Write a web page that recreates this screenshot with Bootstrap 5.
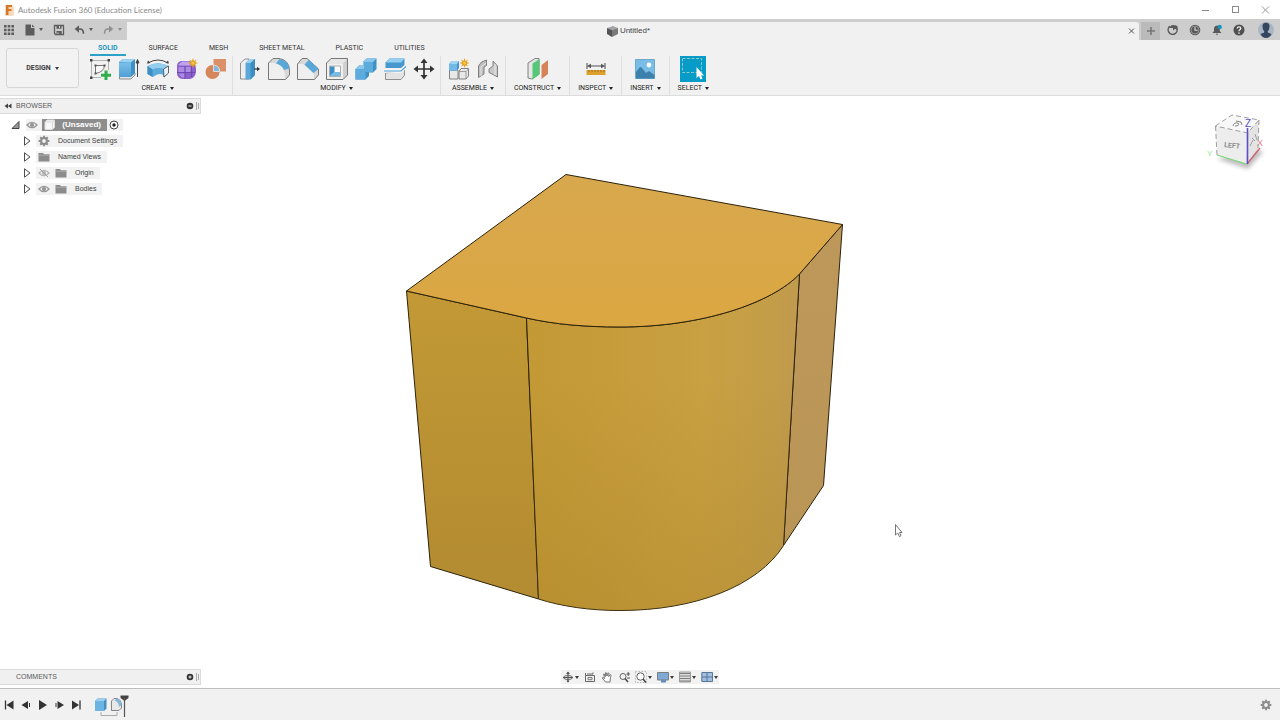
<!DOCTYPE html>
<html lang="en">
<head>
<meta charset="utf-8">
<meta name="viewport" content="width=device-width, initial-scale=1">
<title>Autodesk Fusion 360</title>
<link href="https://cdn.jsdelivr.net/npm/bootstrap@5.3.0/dist/css/bootstrap.min.css" rel="stylesheet">
<script src="https://cdn.jsdelivr.net/npm/bootstrap@5.3.0/dist/js/bootstrap.bundle.min.js" defer></script>
<style>
  :root { --chrome: #f1f1f1; --ink: #3c3c3c; }
  body { font: 7px/12px "Liberation Sans", Arial, sans-serif; color: var(--ink); background: #fff; }
  svg { display: block; flex: none; }
  .tool { border: 0; padding: 0; background: none; color: inherit; font: inherit; display: flex; align-items: center; justify-content: center; }
  .tri { width: 0; height: 0; border: 2px solid transparent; border-top: 3px solid currentColor; border-bottom: 0; flex: none; }

  .titlebar { height: 19px; padding: 0 9px 0 4px; font: 8px/18px Lato, "Liberation Sans", sans-serif; color: #8a8a8a; }
  .win-controls { gap: 20px; color: #8a8a8a; }
  .doc-bar { height: 21px; background: #cdcdcd; color: #5c5c5c; }
  .quick { width: 127px; padding: 0 5px 0 3px; }
  .quick .tool { gap: 4px; }
  .quick .tool.idle { color: #8e8e8e; }
  .doc-tab { background: var(--chrome); border-radius: 0 3px 0 0; margin-top: 3px; padding: 0 3px 0 4px; font-size: 8px; color: #444; }
  .doc-name { gap: 2px; }
  .new-tab { width: 19px; background: #bababa; margin: 3px 0 0 2px; }
  .account { gap: 8px; padding: 0 6px; }

  .ribbon { background: var(--chrome); border-bottom: 1px solid #dcdcdc; font-family: Roboto, "Liberation Sans", sans-serif; font-size: 7px; }
  .workspace { width: 73px; height: 40px; margin: 8px 4px 0 6px; gap: 4px; border: 1px solid #d6d6d6; border-radius: 3px; font-weight: 700; background: #f3f3f3; }
  .ribbon-tabs { gap: 15px; padding-left: 7px; height: 16px; }
  .ribbon-tabs a { padding: 1px 8px 0; color: #333; text-decoration: none; line-height: 15px; border-bottom: 2px solid transparent; height: 16px; }
  .ribbon-tabs a.active { color: #1a97bd; border-color: #2ba3c8; font-weight: 700; }
  .group { padding: 1px 2px 0; border-right: 1px solid #dedede; color: #222; }
  .group.pair { padding: 1px 3px 0; }
  .group.single { padding: 1px 8px 0; }
  .group:last-child { border: 0; }
  .group .icon-btn { width: 29px; height: 24px; }
  .group .label-btn { gap: 3px; line-height: 14px; }

  .viewport { min-height: 0; }
  .panel-bar { width: 201px; height: 16px; background: #f0f0f0; border: 1px solid #dadada; border-left: 0; padding: 0 1px 0 4px; color: #5a5a5a; }
  .browser { padding-top: 2px; }
  .tree { gap: 4px; padding: 5px 0 0; }
  .node { height: 12px; }
  .node .chip { background: #f2f2f2; height: 12px; padding-right: 6px; }
  .node .chip.head { padding-right: 2px; }
  .root-name { background: #8d8d8d; color: #fff; font-weight: 700; font-size: 8px; height: 12px; width: 65px; padding: 0 6px 0 2px; }
  .foot { display: grid; grid-template-columns: 1fr auto 1fr; align-items: center; padding-bottom: 3px; }
  .nav-tools { background: #f2f2f2; gap: 5px; height: 14px; padding: 0 1px; }
  .nav-tools .tool { gap: 1px; }
  .cube { right: 14px; top: 12px; }
  .timeline { height: 32px; background: var(--chrome); border-top: 1px solid #bdbdbd; padding: 0 8px 0 3px; }
  .playback { color: #333; }
</style>
</head>
<body class="vh-100 d-flex flex-column overflow-hidden">

<svg width="0" height="0" class="position-absolute" aria-hidden="true">
  <defs>
    <linearGradient id="blueFace" x1="0" y1="0" x2="0" y2="1"><stop offset="0" stop-color="#7cc0ea"/><stop offset="1" stop-color="#4f9fd4"/></linearGradient>
    <symbol id="eye" viewBox="0 0 12 12"><path d="M1 6Q6 .5 11 6Q6 11.500 1 6Z" fill="none" stroke="#929292" stroke-width="1.200"/><circle cx="6" cy="6" r="2.100" fill="#929292"/></symbol>
    <symbol id="folder" viewBox="0 0 12 12"><path d="M.5 2H5L6 3.200H11.500V10.500H.5Z" fill="#8b8b8b"/><path d="M.5 4.200H11.500" stroke="#bcbcbc" stroke-width=".7"/></symbol>
    <symbol id="expand" viewBox="0 0 12 12"><path d="M3.500 1.800V10.200L9 6Z" fill="#fff" stroke="#4a4a4a"/></symbol>
    <symbol id="gear" viewBox="0 0 12 12"><circle cx="6" cy="6" r="2.900" fill="none" stroke="#8a8a8a" stroke-width="2"/><path d="M6 .7V2.500M6 9.500V11.300M.7 6H2.500M9.500 6H11.300M2.250 2.250L3.500 3.500M8.500 8.500L9.750 9.750M2.250 9.750L3.500 8.500M8.500 3.500L9.750 2.250" stroke="#8a8a8a" stroke-width="1.900"/></symbol>
    <symbol id="star" viewBox="0 0 10 10"><path d="M5 0L6 3L8.500 1.500L7.200 4L10 5L7.200 6L8.500 8.500L6 7.200L5 10L4 7.200L1.500 8.500L2.800 6L0 5L2.800 4L1.500 1.500L4 3Z" fill="#e2a21f"/><circle cx="5" cy="5" r="1.500" fill="#f5c54c"/></symbol>
  </defs>
</svg>

<header class="titlebar d-flex align-items-center justify-content-between">
  <div class="d-flex align-items-center gap-1">
    <svg width="10" height="12" viewBox="0 0 10 12"><path d="M1 1H8L10 3V11L8 12H1Z" fill="#f6d9bd"/><path d="M2 1H8V3H4.500V5H7.500V7H4.500V11H2Z" fill="#d87724"/></svg>
    <span>Autodesk Fusion 360 (Education License)</span>
  </div>
  <div class="win-controls d-flex">
    <button class="tool" aria-label="Minimize"><svg width="10" height="10"><path d="M1 5.500H8" stroke="currentColor"/></svg></button>
    <button class="tool" aria-label="Maximize"><svg width="10" height="10"><rect x="1.500" y="1.500" width="6" height="6" fill="none" stroke="currentColor"/></svg></button>
    <button class="tool" aria-label="Close"><svg width="10" height="10"><path d="M1 1.500L8 8.500M8 1.500L1 8.500" stroke="currentColor" stroke-width=".9"/></svg></button>
  </div>
</header>

<div class="doc-bar d-flex">
  <div class="quick d-flex align-items-center justify-content-between">
    <button class="tool" aria-label="Data panel"><svg width="12" height="12" viewBox="0 0 12 12"><path d="M1 1h2.600v2.600H1zM4.700 1h2.600v2.600H4.700zM8.400 1H11v2.600H8.400zM1 4.700h2.600v2.600H1zM4.700 4.700h2.600v2.600H4.700zM8.400 4.700H11v2.600H8.400zM1 8.400h2.600V11H1zM4.700 8.400h2.600V11H4.700zM8.400 8.400H11V11H8.400z" fill="currentColor"/></svg></button>
    <button class="tool" aria-label="File"><svg width="10" height="12" viewBox="0 0 10 12"><path d="M.5.5H6V4H9.500V11.500H.5Z" fill="currentColor"/><path d="M7 .5L9.500 3H7Z" fill="currentColor"/></svg><span class="tri"></span></button>
    <button class="tool" aria-label="Save"><svg width="12" height="12" viewBox="0 0 12 12"><path d="M1.500 1.500H10.500V10.500H2.500L1.500 9.500Z" fill="none" stroke="currentColor" stroke-width="1.300"/><path d="M3.500 1.500H8.500V4.800H3.500ZM3.500 7H8.700V10.500H3.500Z" fill="currentColor"/><path d="M6.500 2V4M5 8.500V10" stroke="#ddd"/></svg></button>
    <button class="tool" aria-label="Undo"><svg width="11" height="12" viewBox="0 0 11 12"><path d="M3 5H6Q9.500 5 9.500 9.800" fill="none" stroke="currentColor" stroke-width="1.700"/><path d="M5 1.200V8.800L.7 5Z" fill="currentColor"/></svg><span class="tri"></span></button>
    <button class="tool idle" aria-label="Redo"><svg width="11" height="12" viewBox="0 0 11 12"><path d="M8 5H5Q1.500 5 1.500 9.800" fill="none" stroke="currentColor" stroke-width="1.400"/><path d="M6 1.500V8.500L10.300 5Z" fill="currentColor"/></svg><span class="tri"></span></button>
  </div>
  <div class="doc-tab flex-grow-1 d-flex align-items-center">
    <div class="doc-name flex-grow-1 d-flex align-items-center justify-content-center">
      <svg width="11" height="11" viewBox="0 0 11 11"><path d="M0 2L6 0L11 2L5 4Z" fill="#a3a3a3"/><path d="M0 2L5 4V11L0 8Z" fill="#555"/><path d="M5 4L11 2V8L5 11Z" fill="#797979"/></svg>
      <span>Untitled*</span>
    </div>
    <button class="tool" aria-label="Close tab"><svg width="10" height="10"><path d="M3 2.500L8 7.500M8 2.500L3 7.500" stroke="#555"/></svg></button>
  </div>
  <button class="tool new-tab" aria-label="New tab"><svg width="10" height="10"><path d="M5 1V9M1 5H9" stroke="#777" stroke-width="1.600"/></svg></button>
  <div class="account d-flex align-items-center">
    <button class="tool" aria-label="Extensions"><svg width="14" height="14" viewBox="0 0 14 14"><path d="M4 3.200A4.500 4.500 0 1 0 10.500 4.500" fill="none" stroke="#595959" stroke-width="1.500"/><path d="M3 5L5.500 2.300L8 2L11.500 3L11 7L9 5.800L7 7.500L7 5Z" fill="#595959"/></svg></button>
    <button class="tool" aria-label="Job status"><svg width="14" height="14" viewBox="0 0 14 14"><circle cx="7" cy="7" r="5.300" fill="#595959"/><circle cx="7" cy="7" r="4" fill="none" stroke="#aaa" stroke-width=".7"/><path d="M7 4V7.300H9.700" fill="none" stroke="#ddd" stroke-width="1.100"/></svg></button>
    <button class="tool" aria-label="Notifications"><svg width="14" height="14" viewBox="0 0 14 14"><path d="M2.500 10L4 8V5.500Q4 3 7 2.500Q9.800 3 9.800 6V8L11.500 10ZM5.800 10.700H8.200L7 12.200Z" fill="#595959"/><circle cx="9.700" cy="4" r="2.200" fill="#1595c1"/></svg></button>
    <button class="tool" aria-label="Help"><svg width="14" height="14" viewBox="0 0 14 14"><circle cx="7" cy="7" r="5.500" fill="#505050"/><path d="M5.200 5.500Q5.300 3.900 7 3.900T8.800 5.400Q8.700 6.300 7.700 6.800Q7 7.200 7 8.200" fill="none" stroke="#eee" stroke-width="1.300"/><circle cx="7" cy="10" r=".8" fill="#eee"/></svg></button>
    <button class="tool ms-1" aria-label="Profile"><svg width="16" height="16" viewBox="0 0 16 16"><circle cx="8" cy="8" r="8" fill="#a9b4c4"/><path d="M8 .8Q12 1 11.500 5Q11.300 8 9.800 9V10.500L13.500 12Q11.500 16 8 16T2.500 12L6.200 10.500V9Q4.700 8 4.500 5Q4 1 8 .8Z" fill="#34455f"/></svg></button>
  </div>
</div>

<div class="ribbon d-flex align-items-start">
  <button class="tool workspace">DESIGN <span class="tri"></span></button>
  <div>
    <nav class="ribbon-tabs d-flex">
      <a href="#" class="active">SOLID</a><a href="#">SURFACE</a><a href="#">MESH</a><a href="#">SHEET METAL</a><a href="#">PLASTIC</a><a href="#">UTILITIES</a>
    </nav>
    <div class="d-flex">
      <div class="group d-flex flex-column align-items-center">
        <div class="d-flex">
          <button class="tool icon-btn" aria-label="Create sketch"><svg width="24" height="24" viewBox="0 0 24 24"><path d="M4 3.500H20M3.500 4V20M20.500 4V13M4 20.500H13" fill="none" stroke="#a5a5a5" stroke-width=".8"/><path d="M2 2h2.500v2.500H2zM19.500 2h2.500v2.500h-2.500zM2 19.500h2.500v2.500H2z" fill="#444"/><path d="M7.500 16.500V8.500H16.500Q16 15 7.500 16.500Z" fill="#fafafa" stroke="#666" stroke-width=".9"/><path d="M6.500 7.500h2v2h-2zM15.500 7.500h2v2h-2zM6.500 15.500h2v2h-2z" fill="#555"/><path d="M18 13.500V23M13 18.200H23" stroke="#31ad4d" stroke-width="3"/></svg></button>
          <button class="tool icon-btn" aria-label="Extrude"><svg width="24" height="24" viewBox="0 0 24 24"><path d="M2.500 19.500V22H14L18 18V16" fill="#e5e5e5" stroke="#777" stroke-width=".8"/><path d="M2 5L6 2H18V16L14 20H2Z" fill="#3f90c6"/><path d="M2 5L6 2H18L14 5.500Z" fill="#9bd2f1"/><path d="M2 5.500H14V20H2Z" fill="url(#blueFace)"/><path d="M20.500 20V4M19 6L20.500 2.500L22 6Z" fill="#444" stroke="#444"/></svg></button>
          <button class="tool icon-btn" aria-label="Revolve"><svg width="24" height="24" viewBox="0 0 24 24"><path d="M2 6Q12 0 22 6" fill="none" stroke="#444"/><path d="M1 6.500L2 3.500L4.500 6ZM23 6.500L22 3.500L19.500 6Z" fill="#444"/><path d="M1.500 9Q12 3.500 22.500 9V16L18 20.500L16.500 17.500Q12 15.500 7 20L1.500 17Z" fill="#5aaadd"/><path d="M1.500 9Q12 3.500 22.500 9L17.500 12Q12 10 6.500 12.500Z" fill="#95cdee"/><path d="M1.500 9L6.500 12.500V20L1.500 17Z" fill="#3e8ec4"/><path d="M17.500 12L22.500 9V16L18 20Z" fill="#e7f3fa" stroke="#444" stroke-width=".8"/></svg></button>
          <button class="tool icon-btn" aria-label="Create form"><svg width="24" height="24" viewBox="0 0 24 24"><path d="M6 4H14Q20 5 21 11V15Q20 21 15 22H7Q2 21 2 16V9Q2 5 6 4Z" fill="#8a61cb"/><path d="M3 8L7 4.500H14L17 7L14 8.500H5Z" fill="#c0a5ec"/><path d="M4 10H9.500V15H3.500V11ZM10.500 10H15.500V15H10.500ZM4 16.500H9.500V21Q5 20.500 4 16.500Z" fill="#ad8be4"/><path d="M10 9V22M2 15.500H20M16.500 9V20" stroke="#6844a7" stroke-width=".8" fill="none"/><use href="#star" x="13" y="1" width="10" height="10"/></svg></button>
          <button class="tool icon-btn" aria-label="Derive"><svg width="24" height="24" viewBox="0 0 24 24"><path d="M9.500 2H22V14.500H9.500Z" fill="#da9068"/><circle cx="8.500" cy="15" r="7" fill="#d5875b"/><path d="M9.500 8Q16 9 15.500 14.500H9.500Z" fill="#7eb8dc" stroke="#eee" stroke-width=".8"/></svg></button>
        </div>
        <button class="tool label-btn">CREATE <span class="tri"></span></button>
      </div>
      <div class="group d-flex flex-column align-items-center">
        <div class="d-flex">
          <button class="tool icon-btn" aria-label="Press pull"><svg width="24" height="24" viewBox="0 0 24 24"><path d="M2.500 6L7 2H11V22H2.500Z" fill="#eee" stroke="#777" stroke-width=".8"/><path d="M7.500 6L11.500 2H17V18L12.500 22.500H7.500Z" fill="#5aa8da"/><path d="M7.500 6L11.500 2H17L12.500 6Z" fill="#9dd1ef"/><path d="M12.500 6L17 2V18L12.500 22.500Z" fill="#3e8ec4"/><path d="M16 12H19.500" stroke="#333" stroke-width="1.200"/><path d="M19 9.700L22 12L19 14.300Z" fill="#333"/></svg></button>
          <button class="tool icon-btn" aria-label="Fillet"><svg width="24" height="24" viewBox="0 0 24 24"><path d="M1.500 22.500V6L6 1.500H12Q22 3 22.500 13V18L18.500 22.500Z" fill="#d8d8d8" stroke="#777"/><path d="M2 6H7Q17 7 18 18V22H2Z" fill="#efefef"/><path d="M9 6.500L12.500 2Q21.500 3.500 22.300 11.500L17 13Q15 8 9 6.500Z" fill="#59a8da"/></svg></button>
          <button class="tool icon-btn" aria-label="Chamfer"><svg width="24" height="24" viewBox="0 0 24 24"><path d="M1.500 22.500V7L6 1.500H11L22.500 12V18L18.500 22.500Z" fill="#d8d8d8" stroke="#777"/><path d="M2 7H7L18 17V22H2Z" fill="#efefef"/><path d="M8.500 7.500L13 2.800L22.500 12L17.500 16Z" fill="#59a8da"/></svg></button>
          <button class="tool icon-btn" aria-label="Shell"><svg width="24" height="24" viewBox="0 0 24 24"><path d="M1.500 22.500V6L6 1.500H22.500V18L18 22.500Z" fill="#cfcfcf" stroke="#777"/><path d="M2 6.500L6.500 2H22L18 6.500Z" fill="#e6e6e6"/><path d="M2 6.500H18V22H2Z" fill="#f0f0f0"/><path d="M4.500 9H15.500V19.500H4.500Z" fill="#fafafa" stroke="#999" stroke-width=".8"/><path d="M5 9.500L9.500 9.500V15L5 19Z" fill="#3c90c6"/><path d="M5 19L9.500 15H15V19Z" fill="#77bce6"/></svg></button>
          <button class="tool icon-btn" aria-label="Combine"><svg width="24" height="24" viewBox="0 0 24 24"><path d="M1.500 22.500V12L5 8.500H9V5L12.500 1.500H22.500V12L19 15.500H15V19L11.500 22.500Z" fill="#3f90c6"/><path d="M1.500 12L5 8.500H9V5L12.500 1.500H22.500L19 5H10.500V12Z" fill="#8ac7eb"/><path d="M1.500 12H10V5H19V15H11.500V22.500H1.500Z" fill="#5cabdc"/></svg></button>
          <button class="tool icon-btn" aria-label="Split body"><svg width="24" height="24" viewBox="0 0 24 24"><path d="M2.500 11V5.500L6.500 1.500H21.500V8L18 11Z" fill="#4798ce"/><path d="M2.500 5.500L6.500 1.500H21.500L18 5.500Z" fill="#94cef0"/><path d="M2.500 16V22.500H18L21.500 18.500V13Z" fill="#e3e3e3" stroke="#777" stroke-width=".8"/><path d="M1 14H18L23 9.500" fill="none" stroke="#f7f7f7" stroke-width="3.500"/><path d="M1 14H18L23 9.500" fill="none" stroke="#4da1d5" stroke-width="1.200"/></svg></button>
          <button class="tool icon-btn" aria-label="Move"><svg width="24" height="24" viewBox="0 0 24 24"><path d="M12 4V20M4 12H20" stroke="#333" stroke-width="1.700"/><path d="M12 1.500L15.500 6H8.500ZM12 22.500L15.500 18H8.500ZM1.500 12L6 8.500V15.500ZM22.500 12L18 8.500V15.500Z" fill="#333"/></svg></button>
        </div>
        <button class="tool label-btn">MODIFY <span class="tri"></span></button>
      </div>
      <div class="group pair d-flex flex-column align-items-center">
        <div class="d-flex">
          <button class="tool icon-btn" aria-label="New component"><svg width="24" height="24" viewBox="0 0 24 24"><path d="M2.500 13H11V22H2.500ZM12 14.500L14 11.500H21.500V19L19 22H12Z" fill="#e8e8e8" stroke="#777" stroke-width=".9"/><path d="M12 14.500H19V22M19 14.500L21.500 12" fill="none" stroke="#888" stroke-width=".8"/><path d="M2 7L4.500 4H12V11L10 13.500H2Z" fill="#4596cc"/><path d="M2 7L4.500 4H12L10 7Z" fill="#a1d4f1"/><path d="M2 7H10V13.500H2Z" fill="#72b8e4"/><use href="#star" x="12.500" y="1" width="10" height="10"/></svg></button>
          <button class="tool icon-btn" aria-label="Joint"><svg width="24" height="24" viewBox="0 0 24 24"><path d="M2.500 20.500V9L5.500 5L10.500 3V8.500L8 10V17Z" fill="#bdbdbd" stroke="#777" stroke-width=".9"/><path d="M5 19V10L10 6" fill="none" stroke="#e9e9e9"/><path d="M21.500 20V9L17 4V9L13 12V15.500L17 17.500Z" fill="#c8c8c8" stroke="#777" stroke-width=".9"/><path d="M19 7V18" stroke="#eaeaea"/></svg></button>
        </div>
        <button class="tool label-btn">ASSEMBLE <span class="tri"></span></button>
      </div>
      <div class="group single d-flex flex-column align-items-center">
        <button class="tool icon-btn" aria-label="Offset plane"><svg width="24" height="24" viewBox="0 0 24 24"><path d="M2 21V6L9 1.500H13V17L6 22Z" fill="#e6e6e6" stroke="#777" stroke-width=".9"/><path d="M6.500 6.500L13.500 2V17.500L6.500 22.500Z" fill="#55c878"/><path d="M15.500 8L22 3V17L15.500 22Z" fill="#d58358"/></svg></button>
        <button class="tool label-btn">CONSTRUCT <span class="tri"></span></button>
      </div>
      <div class="group single d-flex flex-column align-items-center">
        <button class="tool icon-btn" aria-label="Measure"><svg width="24" height="24" viewBox="0 0 24 24"><path d="M3 6V12M21 6V12M5 9H19" stroke="#555" stroke-width="1.100"/><path d="M3 9L7 6.700V11.300ZM21 9L17 6.700V11.300Z" fill="#555"/><path d="M2.500 13H21.500V18H2.500Z" fill="#dca02c"/><path d="M5 13V15M8 13V15M11 13V15M14 13V15M17 13V15M20 13V15" stroke="#946814" stroke-width=".8"/></svg></button>
        <button class="tool label-btn">INSPECT <span class="tri"></span></button>
      </div>
      <div class="group single d-flex flex-column align-items-center">
        <button class="tool icon-btn" aria-label="Insert image"><svg width="24" height="24" viewBox="0 0 24 24"><path d="M2.500 2.500H21.500V21.500H2.500Z" fill="#79bce5" stroke="#5b9cc4" stroke-width=".8"/><circle cx="16" cy="8" r="2.400" fill="#f5fbff"/><path d="M3 15L7 10L8.500 10.500L13 16L16 14L21.500 18V21.500H3Z" fill="#3c80ac"/></svg></button>
        <button class="tool label-btn">INSERT <span class="tri"></span></button>
      </div>
      <div class="group single d-flex flex-column align-items-center">
        <button class="tool icon-btn" aria-label="Select"><svg width="26" height="26" viewBox="0 0 26 26"><path d="M0 0H26V26H0Z" fill="#079bc8"/><path d="M2.500 2.500H21.500V16.500H2.500Z" fill="none" stroke="#8fc4c8" stroke-dasharray="3 1.500"/><path d="M16.500 11V22L19 20L20.500 23.500L22.500 22.500L21 19.500H24Z" fill="#fff"/></svg></button>
        <button class="tool label-btn">SELECT <span class="tri"></span></button>
      </div>
    </div>
  </div>
</div>

<main class="viewport flex-grow-1 position-relative d-flex flex-column justify-content-between">
  <svg class="position-absolute top-0 start-0 w-100 h-100" viewBox="0 96 1280 592" role="img" aria-label="Filleted box model">
    <defs>
      <linearGradient id="topFace" x1="0" y1="0" x2="0" y2="1"><stop offset="0" stop-color="#d8a84e"/><stop offset="1" stop-color="#dba742"/></linearGradient>
      <linearGradient id="leftFace" x1="0" y1="0" x2="0" y2="1"><stop offset="0" stop-color="#c29935"/><stop offset="1" stop-color="#b38b31"/></linearGradient>
      <linearGradient id="roundFace" x1="0" y1="0" x2="1" y2="0"><stop offset="0" stop-color="#c29935"/><stop offset=".3" stop-color="#c69c3b"/><stop offset=".65" stop-color="#c9a042"/><stop offset=".9" stop-color="#c39d48"/><stop offset="1" stop-color="#c09a4f"/></linearGradient>
      <linearGradient id="roundShade" x1="0" y1="0" x2="0" y2="1"><stop offset=".3" stop-color="#a07a20" stop-opacity="0"/><stop offset="1" stop-color="#a07a20" stop-opacity=".3"/></linearGradient>
      <linearGradient id="rightFace" x1="0" y1="0" x2="0" y2="1"><stop offset="0" stop-color="#bd985a"/><stop offset="1" stop-color="#b99556"/></linearGradient>
    </defs>
    <g stroke="#2c220c" stroke-width="1" stroke-linejoin="round">
      <path d="M406.500 291L526.500 318L538.500 599L430.500 566.500Z" fill="url(#leftFace)"/>
      <path d="M799.500 274L842.500 224.500L823.500 485.500L783.500 545.500Z" fill="url(#rightFace)"/>
      <path d="M526.500 318C555 324.500 586 327 620 327C702 327 772 303 799.500 274L783.500 545.500C758 586 695 610.500 620 610.500C590 610.500 562 606.500 538.500 599Z" fill="url(#roundFace)"/>
      <path d="M526.500 318C555 324.500 586 327 620 327C702 327 772 303 799.500 274L783.500 545.500C758 586 695 610.500 620 610.500C590 610.500 562 606.500 538.500 599Z" fill="url(#roundShade)" stroke="none"/>
      <path d="M406.500 291L566 174.500L842.500 224.500L799.500 274C772 303 702 327 620 327C586 327 555 324.500 526.500 318Z" fill="url(#topFace)"/>
    </g>
    <path d="M895.500 524.500V535L897.700 533L899.300 536.500L901 535.700L899.500 532.500H902Z" fill="#fff" stroke="#666" stroke-width=".9"/>
  </svg>

  <div class="browser position-relative">
    <div class="panel-bar d-flex align-items-center">
      <svg width="8" height="8"><path d="M4 1.500V6.500L.5 4ZM7.500 1.500V6.500L4 4Z" fill="#444"/></svg>
      <span class="flex-grow-1 ps-1">BROWSER</span>
      <button class="tool" aria-label="Collapse"><svg width="10" height="8"><circle cx="5" cy="4" r="3.300" fill="#333"/><path d="M3.500 4H6.500" stroke="#eee"/></svg></button>
      <svg width="4" height="8"><path d="M1.500 0V8M3.500 1V7" stroke="#999" stroke-width=".8"/></svg>
    </div>
    <div class="tree d-flex flex-column">
      <div class="node d-flex">
        <svg width="26" height="12"><path d="M12 9.500H19V2.500Z" fill="#999" stroke="#444"/></svg>
        <div class="chip d-flex align-items-center head">
          <svg width="12" height="12"><use href="#eye"/></svg>
          <div class="root-name d-flex align-items-center justify-content-between ms-1">
            <svg width="12" height="12" viewBox="0 0 12 12"><path d="M1 10.500V3L3 1H10.500V8.500L8.500 10.500Z" fill="#f8f8f8" stroke="#ddd"/><path d="M1 3H8.500V10.500M8.500 3L10.500 1" fill="none" stroke="#ccc" stroke-width=".7"/></svg>
            <span>(Unsaved)</span>
          </div>
          <svg width="14" height="12" viewBox="0 0 14 12"><circle cx="7" cy="6" r="4" fill="#fff" stroke="#444"/><circle cx="7" cy="6" r="1.700" fill="#222"/></svg>
        </div>
      </div>
      <div class="node d-flex">
        <svg class="ms-3" width="20" height="12" viewBox="0 0 20 12"><use href="#expand" x="5" width="12" height="12"/></svg>
        <div class="chip d-flex"><svg width="22" height="12"><use href="#gear" x="2" width="12" height="12"/></svg><span>Document Settings</span></div>
      </div>
      <div class="node d-flex">
        <svg class="ms-3" width="20" height="12" viewBox="0 0 20 12"><use href="#expand" x="5" width="12" height="12"/></svg>
        <div class="chip d-flex"><svg width="22" height="12"><use href="#folder" x="2" width="12" height="12"/></svg><span>Named Views</span></div>
      </div>
      <div class="node d-flex">
        <svg class="ms-3" width="20" height="12" viewBox="0 0 20 12"><use href="#expand" x="5" width="12" height="12"/></svg>
        <div class="chip d-flex"><svg width="39" height="12"><g opacity=".65"><use href="#eye" x="2" width="12" height="12"/><path d="M4 2L12 10" stroke="#777"/></g><use href="#folder" x="19" width="12" height="12"/></svg><span>Origin</span></div>
      </div>
      <div class="node d-flex">
        <svg class="ms-3" width="20" height="12" viewBox="0 0 20 12"><use href="#expand" x="5" width="12" height="12"/></svg>
        <div class="chip d-flex"><svg width="39" height="12"><use href="#eye" x="2" width="12" height="12"/><use href="#folder" x="19" width="12" height="12"/></svg><span>Bodies</span></div>
      </div>
    </div>
  </div>

  <svg class="cube position-absolute" width="62" height="64" viewBox="1204 108 62 64" role="img" aria-label="View cube">
    <defs><filter id="soft"><feGaussianBlur stdDeviation="2"/></filter></defs>
    <path d="M1217 159L1248 169L1263 152L1255 148Z" fill="#888" opacity=".55" filter="url(#soft)"/>
    <path d="M1215.500 126L1232 115L1259 120L1247.500 133Z" fill="#f8f8f8"/>
    <path d="M1215.500 126L1247.500 133L1246.500 164L1217 155Z" fill="#ededed"/>
    <path d="M1247.500 133L1259 120L1258 148L1246.500 164Z" fill="#e4e4e4"/>
    <path d="M1215.500 126L1232 115L1259 120L1247.500 133ZM1215.500 126L1217 155M1259 120L1258 148" fill="none" stroke="#888" stroke-width=".8" stroke-dasharray="5 3"/>
    <path d="M1233 126Q1234 122 1238 123Q1240 126 1235 126M1236 121L1241 122L1242 125" fill="none" stroke="#777" stroke-width=".9"/>
    <path d="M1250 146L1253 140M1252 138L1255 141M1255 134L1257 140" stroke="#999" stroke-width=".9"/>
    <path d="M1217 155L1246.500 164" stroke="#79d979" stroke-width="1.300"/>
    <path d="M1247 164L1260 148" stroke="#d2606e" stroke-width="1.200"/>
    <path d="M1247.500 128V164" stroke="#5a4fc8" stroke-width="1.600"/>
    <text x="1224" y="147" font-size="7" font-weight="700" fill="#8c8c8c" font-family="Roboto, sans-serif" transform="rotate(6 1224 147)">LEFT</text>
    <g font-family="Liberation Sans, sans-serif">
      <text x="1245" y="127" font-size="10" fill="#5a4fc8">Z</text>
      <text x="1257" y="146" font-size="9" fill="#e0808a">X</text>
      <text x="1207" y="156" font-size="8" fill="#8fe88f">Y</text>
    </g>
  </svg>

  <div class="foot position-relative">
    <div class="panel-bar d-flex align-items-center">
      <span class="flex-grow-1 ps-1 ms-2">COMMENTS</span>
      <button class="tool" aria-label="Add comment"><svg width="10" height="8"><circle cx="5" cy="4" r="3.300" fill="#333"/><path d="M3.500 4H6.500M5 2.500V5.500" stroke="#eee"/></svg></button>
      <svg width="4" height="8"><path d="M1.500 0V8M3.500 1V7" stroke="#999" stroke-width=".8"/></svg>
    </div>
    <div class="nav-tools d-flex align-items-center">
      <button class="tool" aria-label="Orbit"><svg width="12" height="12" viewBox="0 0 12 12"><path d="M6 1V11M1 6.500H11" stroke="#555" stroke-width="1.200"/><ellipse cx="6" cy="6.500" rx="4.500" ry="2" fill="none" stroke="#666"/><path d="M4 3L6 .5L8 3ZM4.500 9.500L6 11.800L7.500 9.500Z" fill="#555"/></svg><span class="tri"></span></button>
      <button class="tool" aria-label="Look at"><svg width="12" height="12" viewBox="0 0 12 12"><path d="M1.500 4.500H10.500V10.500H1.500ZM1.500 2V4.500M3 3H9V1.500" fill="none" stroke="#666"/><path d="M4 6.500H8V8.700H4Z" fill="none" stroke="#777"/></svg></button>
      <button class="tool" aria-label="Pan"><svg width="12" height="12" viewBox="0 0 12 12"><path d="M4.500 11L1.200 7Q1.500 5.800 3.500 7.500L2.700 3Q3.500 2 4.300 5.500L4.700 1.500Q5.800.7 6 5L7.300 1.700Q8.500 1.500 7.700 5.500L9.500 3.500Q10.500 4 9.500 6.500L9 11Z" fill="#fff" stroke="#666" stroke-width=".9"/></svg></button>
      <button class="tool" aria-label="Zoom"><svg width="12" height="12" viewBox="0 0 12 12"><circle cx="5" cy="5.500" r="3" fill="none" stroke="#666"/><path d="M7 7.500L10 11" stroke="#444" stroke-width="1.500"/><path d="M8.500 3H12M10.200 1V5M9 7H12" stroke="#555"/></svg></button>
      <button class="tool" aria-label="Zoom window"><svg width="12" height="12" viewBox="0 0 12 12"><path d="M.5.500H11.500V11.500H.5Z" fill="none" stroke="#bbb" stroke-dasharray="1.500 1.500"/><circle cx="5.500" cy="5.500" r="3.700" fill="#fff" stroke="#666"/><path d="M8 8L11 11.500" stroke="#444" stroke-width="1.500"/></svg><span class="tri"></span></button>
      <button class="tool" aria-label="Display settings"><svg width="12" height="12" viewBox="0 0 12 12"><path d="M.5 1.500H11.500V9H.5Z" fill="#7fa9d6" stroke="#7d7d7d"/><path d="M4 9H9V11.500H4Z" fill="#648db7"/></svg><span class="tri"></span></button>
      <button class="tool" aria-label="Grid and snaps"><svg width="12" height="12" viewBox="0 0 12 12"><path d="M.5 1H11.500V11H.5Z" fill="#ddd" stroke="#888" stroke-width=".8"/><path d="M1 2.500H11M1 5H11M1 7.500H11M1 10H11" stroke="#7d7d7d"/></svg><span class="tri"></span></button>
      <button class="tool" aria-label="Viewports"><svg width="12" height="12" viewBox="0 0 12 12"><path d="M.8 1.500H11.500V10.500H.8ZM6 1.500V10.500M.8 6H11.500" fill="#9dbfe3" stroke="#5c7590"/></svg><span class="tri"></span></button>
    </div>
  </div>
</main>

<footer class="timeline d-flex align-items-center justify-content-between">
  <div class="playback d-flex align-items-center">
    <div class="d-flex gap-1">
      <button class="tool" aria-label="Go to start"><svg width="13" height="12"><path d="M2.500 1.500V10.500" stroke="currentColor" stroke-width="1.300"/><path d="M10.500 1.500V10.500L3.500 6Z" fill="currentColor"/></svg></button>
      <button class="tool" aria-label="Step back"><svg width="13" height="12"><path d="M8 2V10L1.500 6Z" fill="currentColor"/><path d="M9.500 4V8" stroke="currentColor"/></svg></button>
      <button class="tool" aria-label="Play"><svg width="13" height="12"><path d="M2 1V11L10 6Z" fill="currentColor"/></svg></button>
      <button class="tool" aria-label="Step forward"><svg width="13" height="12"><path d="M3.500 2V10L10 6Z" fill="currentColor"/><path d="M2 4V8" stroke="currentColor"/></svg></button>
      <button class="tool" aria-label="Go to end"><svg width="13" height="12"><path d="M9 1.500V10.500" stroke="currentColor" stroke-width="1.300"/><path d="M1 1.500V10.500L8 6Z" fill="currentColor"/></svg></button>
    </div>
    <svg class="ms-2" width="38" height="24" viewBox="92 693 38 24" role="img" aria-label="Extrude and fillet features">
      <path d="M95 701L97.500 698.500H106.500V708.500L104 711H95Z" fill="#458fc3"/><path d="M95 701L97.500 698.500H106.500L104 701Z" fill="#9dd0ee"/><path d="M95 701H104V711H95Z" fill="#6cb4e2"/>
      <path d="M111.500 710.500V701L114 698.500H117Q121 699.500 121.500 704V708L119 710.500Z" fill="#e8e8e8" stroke="#777" stroke-width=".9"/><path d="M114.500 700.500L117 698.500Q121 699.500 121.500 705L119 707Q119 702 114.500 700.500Z" fill="#83b9dc"/>
      <path d="M101 712V715.500H117V712" fill="none" stroke="#aaa"/>
      <path d="M120.500 695.500H128.500V698L124.500 701L120.500 698Z" fill="#444"/><path d="M124.500 698V717" stroke="#555" stroke-width="1.200"/>
    </svg>
  </div>
  <button class="tool" aria-label="Timeline settings"><svg width="12" height="12"><use href="#gear"/></svg></button>
</footer>
</body>
</html>
